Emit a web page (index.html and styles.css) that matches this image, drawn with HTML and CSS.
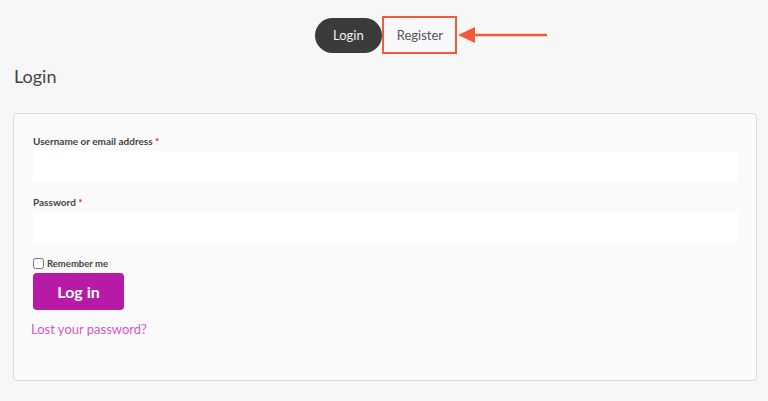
FILE: index.html
```html
<!DOCTYPE html>
<html lang="en">
<head>
    <meta charset="UTF-8">
    <meta name="viewport" content="width=device-width, initial-scale=1.0">
    <title>My account</title>
    <link rel="stylesheet" href="styles.css">
</head>
<body>
    <nav class="tabs">
        <a href="#" class="tab tab-active">Login</a>
        <a href="#" class="tab tab-marked">Register</a>
        <svg class="arrow" width="90" height="18" viewBox="0 0 90 18">
            <line x1="14" y1="9" x2="89" y2="9" stroke="#f15a3a" stroke-width="2.5"/>
            <polygon points="0,9 17,1 17,17" fill="#f15a3a"/>
        </svg>
    </nav>

    <main>
        <h2 class="title">Login</h2>

        <form class="login-card">
            <label class="field-label" for="username">Username or email address <span class="req">*</span></label>
            <input class="field-input" type="text" id="username">

            <label class="field-label" for="password">Password <span class="req">*</span></label>
            <input class="field-input" type="password" id="password">

            <label class="remember">
                <input type="checkbox" class="remember-box">
                <span>Remember me</span>
            </label>

            <button type="submit" class="btn-login">Log in</button>

            <a href="#" class="lost">Lost your password?</a>
        </form>
    </main>
</body>
</html>
```

FILE: styles.css
```css
body {
    font-family: 'Lato', 'Open Sans', sans-serif;
    margin: 0;
    padding: 0;
    background-color: #f7f7f7;
    color: #3d3d3d;
}

.tabs {
    display: flex;
    justify-content: center;
    align-items: center;
    padding: 16px 0 0 4px;
    position: relative;
}

.tab {
    font-size: 13px;
    text-decoration: none;
    color: #555;
    height: 34px;
    display: flex;
    align-items: center;
    padding: 0 18px;
}

.tab-active {
    background-color: #3b3b3b;
    color: #f2f2f2;
    border-radius: 18px;
    height: 35px;
}

.tab-marked {
    border: 2px solid #f15a3a;
    height: 34px;
    padding: 0 12px 0 13px;
    background-color: #f8f8fa;
}

.arrow {
    position: absolute;
    left: 458px;
    top: 26px;
}

main {
    padding: 0 11px 0 13px;
}

.title {
    font-size: 18px;
    font-weight: normal;
    color: #444;
    margin: 11px 0 0 1px;
    line-height: 22px;
}

.login-card {
    margin-top: 26px;
    background-color: #fafafa;
    border: 1px solid #dcdcdc;
    border-radius: 4px;
    padding: 21px 18px 30px 19px;
    height: 215px;
    display: flex;
    flex-direction: column;
    align-items: flex-start;
}

.field-label {
    font-size: 10px;
    font-weight: bold;
    color: #444;
    margin-bottom: 4px;
}

.req {
    color: #e2262d;
}

.field-input {
    width: 100%;
    box-sizing: border-box;
    height: 31px;
    border: none;
    background: #fff;
    margin-bottom: 14px;
}

.remember {
    display: flex;
    align-items: center;
    margin-top: 1px;
    font-size: 9.5px;
    font-weight: bold;
    color: #444;
}

.remember-box {
    width: 11px;
    height: 11px;
    margin: 0 3px 0 0;
}

.btn-login {
    margin-top: 4px;
    width: 91px;
    height: 37px;
    background-color: #b81aa8;
    color: #fff;
    border: none;
    border-radius: 4px;
    font-family: inherit;
    font-size: 16px;
    font-weight: bold;
}

.lost {
    margin-top: 11px;
    margin-left: -2px;
    font-size: 13px;
    color: #d955c9;
    text-decoration: none;
}
```
